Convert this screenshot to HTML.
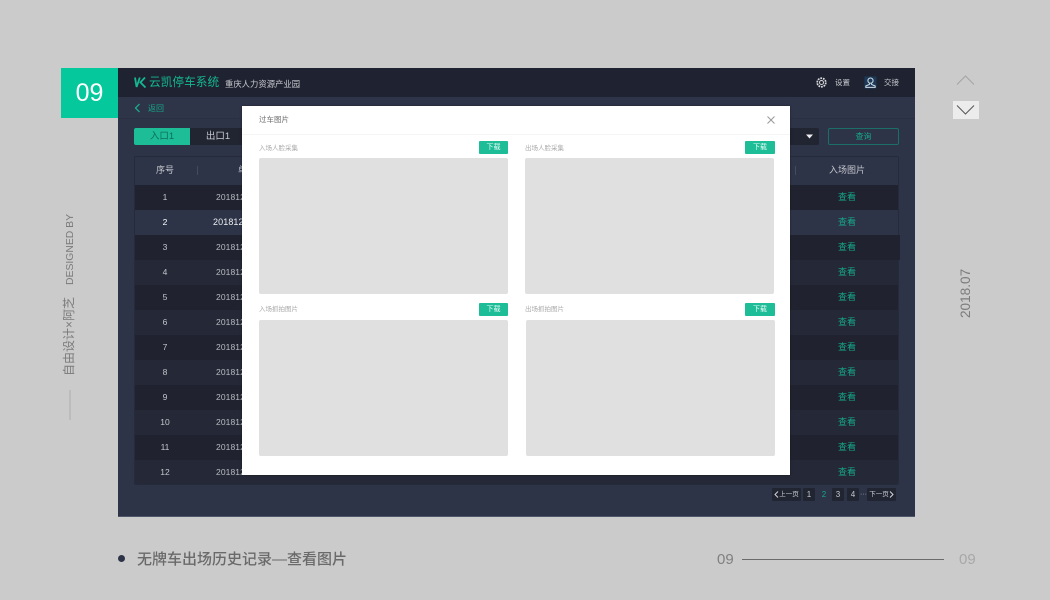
<!DOCTYPE html>
<html lang="zh"><head><meta charset="utf-8">
<style>
*{box-sizing:border-box;margin:0;padding:0}
html,body{width:1050px;height:600px;overflow:hidden;background:#cbcbcb}
body{position:relative;font-family:"Liberation Sans","Noto Sans CJK SC",sans-serif}
#w{position:absolute;left:0;top:0;width:1050px;height:600px;filter:blur(.3px)}
.a{position:absolute;white-space:nowrap}
.c{text-align:center}
.row{position:absolute;left:135px;width:763px;height:25px;background:#252937}
.row.d{background:#20232f}
.n{position:absolute;left:135px;width:60px;text-align:center;font-size:8.5px;line-height:25px;color:#c4c6cc}
.v{position:absolute;left:216px;font-size:8.5px;line-height:25px;letter-spacing:.1px;color:#b9bbc2}
.k{position:absolute;left:796px;width:102px;text-align:center;font-size:9px;line-height:25px;color:#14a888}
.ph{position:absolute;background:#e0e0e0;border-radius:2px}
.btn{position:absolute;width:29px;height:13px;background:#1dbd98;color:#e8fbf6;font-size:7px;line-height:13px;text-align:center;border-radius:1px}
.lab{position:absolute;font-size:6.5px;line-height:12px;color:#a9a9a9}
.pg{position:absolute;top:488px;height:13px;background:#212431;color:#c8cad0;font-size:7px;line-height:13px;text-align:center;border-radius:1px}
.pg svg{position:absolute;top:3px}
</style></head><body><div id="w">

<!-- app -->
<div class="a" style="left:118px;top:68px;width:797px;height:449px;background:#2e3448;border-bottom:1px solid #50566a"></div>
<div class="a" style="left:118px;top:68px;width:797px;height:29px;background:#1f2230"></div>
<div class="a" style="left:118px;top:97px;width:797px;height:22px;background:#2f3549;border-bottom:1px solid #2a3042"></div>

<div class="a c" style="left:61px;top:68px;width:57px;height:50px;background:#05c99c;color:#fff;font-size:25px;line-height:51px">09</div>

<!-- logo -->
<svg class="a" style="left:134px;top:76px" width="13" height="13" viewBox="0 0 13 13"><path d="M1 1.5 L2.6 11 L5.8 1.5 M11 1.5 L6.4 6.4 L11.5 11.5" fill="none" stroke="#14b892" stroke-width="1.8"/></svg>
<div class="a" style="left:149px;top:75px;font-size:11.7px;line-height:15px;color:#14b892">云凯停车系统</div>
<div class="a" style="left:225px;top:78px;font-size:8.35px;line-height:13px;color:#c9cbd0">重庆人力资源产业园</div>

<!-- header right -->
<svg class="a" style="left:815px;top:76px" width="13" height="13" viewBox="0 0 13 13"><circle cx="6.5" cy="6.5" r="2" fill="none" stroke="#d9dadd" stroke-width="1"/><circle cx="6.5" cy="6.5" r="4.3" fill="none" stroke="#d9dadd" stroke-width="1.7" stroke-dasharray="1.8 .9"/></svg>
<div class="a" style="left:835px;top:76px;font-size:7.5px;line-height:13px;color:#c9cbd0">设置</div>
<svg class="a" style="left:864px;top:76px" width="13" height="13" viewBox="0 0 13 13"><rect width="12" height="12" x=".5" y=".5" fill="#1c3a58"/><circle cx="6.5" cy="4.6" r="2.6" fill="none" stroke="#d4dde6"/><path d="M5.4 7.2 V8.4 L1.8 10 V11.4 H11.2 V10 L7.6 8.4 V7.2" fill="none" stroke="#d4dde6"/></svg>
<div class="a" style="left:884px;top:76px;font-size:7.5px;line-height:13px;color:#c9cbd0">交接</div>

<!-- back -->
<svg class="a" style="left:134px;top:103px" width="7" height="10" viewBox="0 0 7 10"><path d="M5.5 1 L1.5 5 L5.5 9" fill="none" stroke="#14b892" stroke-width="1.2"/></svg>
<div class="a" style="left:148px;top:102px;font-size:8px;line-height:13px;color:#14a888">返回</div>

<!-- tabs -->
<div class="a c" style="left:134px;top:128px;width:56px;height:17px;background:#1dbd98;border-radius:2px 0 0 2px;color:#0f6e5a;font-size:9.5px;line-height:18px">入口1</div>
<div class="a c" style="left:190px;top:128px;width:60px;height:17px;background:#212431;color:#c8cad0;font-size:9.5px;line-height:18px;padding-right:4px">出口1</div>
<div class="a" style="left:780px;top:128px;width:39px;height:17px;background:#212431;border-radius:0 2px 2px 0"></div>
<svg class="a" style="left:806px;top:134px" width="7" height="5" viewBox="0 0 7 5"><path d="M0 .5 H7 L3.5 4.5 Z" fill="#eee"/></svg>
<div class="a c" style="left:828px;top:128px;width:71px;height:17px;border:1px solid #1b6f68;border-radius:2px;color:#14a888;font-size:8px;line-height:15px">查询</div>

<!-- table -->
<div class="a" style="left:134px;top:156px;width:765px;height:329px;background:#2e3448;border:1px solid #262b3c;border-radius:2px"></div>
<div class="a c" style="left:135px;top:163px;width:60px;font-size:9px;line-height:14px;color:#c4c6cc">序号</div>
<div class="a" style="left:197px;top:166px;width:1px;height:9px;background:#454b5e"></div>
<div class="a" style="left:238px;top:163px;font-size:9px;line-height:14px;color:#c4c6cc">单</div>
<div class="a" style="left:795px;top:166px;width:1px;height:9px;background:#454b5e"></div>
<div class="a c" style="left:796px;top:163px;width:102px;font-size:9px;line-height:14px;color:#c4c6cc">入场图片</div>

<div class="row d" style="top:185px"></div>
<div class="row" style="top:210px;background:#2e3448"></div>
<div class="row d" style="top:235px;width:765px"></div>
<div class="row" style="top:260px"></div>
<div class="row d" style="top:285px"></div>
<div class="row" style="top:310px"></div>
<div class="row d" style="top:335px"></div>
<div class="row" style="top:360px"></div>
<div class="row d" style="top:385px"></div>
<div class="row" style="top:410px"></div>
<div class="row d" style="top:435px"></div>
<div class="row" style="top:460px;height:24px;border-radius:0 0 2px 2px"></div>

<div class="n" style="top:185px">1</div><div class="v" style="top:185px">201812</div><div class="k" style="top:185px">查看</div>
<div class="n" style="top:210px;color:#fff">2</div><div class="v" style="top:210px;left:213px;color:#ecedf0;font-size:9px">201812</div><div class="k" style="top:210px">查看</div>
<div class="n" style="top:235px">3</div><div class="v" style="top:235px">201812</div><div class="k" style="top:235px">查看</div>
<div class="n" style="top:260px">4</div><div class="v" style="top:260px">201812</div><div class="k" style="top:260px">查看</div>
<div class="n" style="top:285px">5</div><div class="v" style="top:285px">201812</div><div class="k" style="top:285px">查看</div>
<div class="n" style="top:310px">6</div><div class="v" style="top:310px">201812</div><div class="k" style="top:310px">查看</div>
<div class="n" style="top:335px">7</div><div class="v" style="top:335px">201812</div><div class="k" style="top:335px">查看</div>
<div class="n" style="top:360px">8</div><div class="v" style="top:360px">201812</div><div class="k" style="top:360px">查看</div>
<div class="n" style="top:385px">9</div><div class="v" style="top:385px">201812</div><div class="k" style="top:385px">查看</div>
<div class="n" style="top:410px">10</div><div class="v" style="top:410px">201812</div><div class="k" style="top:410px">查看</div>
<div class="n" style="top:435px">11</div><div class="v" style="top:435px">201812</div><div class="k" style="top:435px">查看</div>
<div class="n" style="top:460px">12</div><div class="v" style="top:460px">201812</div><div class="k" style="top:460px">查看</div>

<!-- pagination -->
<div class="pg" style="left:772px;width:29px;padding-left:5px;font-size:6.5px"><svg style="left:2px" width="5" height="7" viewBox="0 0 5 7"><path d="M4 .5 L1 3.5 L4 6.5" fill="none" stroke="#d4d5da"/></svg>上一页</div>
<div class="pg" style="left:803px;width:12px;font-size:8px">1</div>
<div class="a c" style="left:818px;top:488px;width:12px;font-size:8px;line-height:13px;color:#14a888">2</div>
<div class="pg" style="left:832px;width:12px;font-size:8px">3</div>
<div class="pg" style="left:847px;width:12px;font-size:8px">4</div>
<div class="a" style="left:860px;top:488px;font-size:7px;line-height:13px;color:#a9acb5">···</div>
<div class="pg" style="left:867px;width:29px;padding-right:5px;font-size:6.5px">下一页<svg style="right:2px" width="5" height="7" viewBox="0 0 5 7"><path d="M1 .5 L4 3.5 L1 6.5" fill="none" stroke="#d4d5da"/></svg></div>

<!-- modal -->
<div class="a" style="left:242px;top:106px;width:548px;height:369px;background:#fff;box-shadow:0 0 2px rgba(0,0,0,.45)"></div>
<div class="a" style="left:242px;top:134px;width:548px;height:1px;background:#f5f5f5"></div>
<div class="a" style="left:259px;top:114px;font-size:7.5px;line-height:12px;color:#6e6e6e">过车图片</div>
<svg class="a" style="left:767px;top:116px" width="8" height="8" viewBox="0 0 8 8"><path d="M.5 .5 L7.5 7.5 M7.5 .5 L.5 7.5" stroke="#999" stroke-width="1"/></svg>

<div class="lab" style="left:259px;top:143px">入场人脸采集</div>
<div class="btn" style="left:479px;top:141px">下载</div>
<div class="ph" style="left:259px;top:158px;width:249px;height:136px"></div>

<div class="lab" style="left:525px;top:143px">出场人脸采集</div>
<div class="btn" style="left:745px;top:141px;width:30px">下载</div>
<div class="ph" style="left:525px;top:158px;width:249px;height:136px"></div>

<div class="lab" style="left:259px;top:304px">入场抓拍图片</div>
<div class="btn" style="left:479px;top:303px">下载</div>
<div class="ph" style="left:259px;top:320px;width:249px;height:136px"></div>

<div class="lab" style="left:525px;top:304px">出场抓拍图片</div>
<div class="btn" style="left:745px;top:303px;width:30px">下载</div>
<div class="ph" style="left:526px;top:320px;width:249px;height:136px"></div>

<!-- left vertical -->
<div class="a" style="left:62px;top:376px;height:14px;width:170px;transform-origin:0 0;transform:rotate(-90deg);font-size:12px;line-height:14px;color:#7a7a7a">自由设计×阿芝<span style="display:inline-block;width:12px"></span><span style="font-size:10.4px">DESIGNED BY</span></div>
<div class="a" style="left:69px;top:390px;width:2px;height:30px;background:#bcbcbc"></div>

<!-- right -->
<div class="a" style="left:959px;top:318px;height:14px;transform-origin:0 0;transform:rotate(-90deg);font-size:13.6px;line-height:14px;color:#7c7c7c">2018.07</div>
<svg class="a" style="left:956px;top:74px" width="20" height="12" viewBox="0 0 20 12"><path d="M1 10.5 L9.5 2 L18 10.5" fill="none" stroke="#a3a3a3" stroke-width="1"/></svg>
<div class="a" style="left:953px;top:101px;width:26px;height:18px;background:#ececec"></div>
<svg class="a" style="left:956px;top:104px" width="20" height="12" viewBox="0 0 20 12"><path d="M1 1.5 L9.5 10 L18 1.5" fill="none" stroke="#555" stroke-width="1"/></svg>

<!-- footer -->
<div class="a" style="left:118px;top:555px;width:7px;height:7px;border-radius:50%;background:#2e3448"></div>
<div class="a" style="left:137px;top:550px;font-size:15px;line-height:19px;color:#6a6a6a;font-weight:500">无牌车出场历史记录—查看图片</div>
<div class="a" style="left:717px;top:551px;font-size:15px;line-height:18px;color:#808080">09</div>
<div class="a" style="left:742px;top:559px;width:202px;height:1px;background:#6b6b6b"></div>
<div class="a" style="left:959px;top:551px;font-size:15px;line-height:18px;color:#a8a8a8">09</div>

</div></body></html>
